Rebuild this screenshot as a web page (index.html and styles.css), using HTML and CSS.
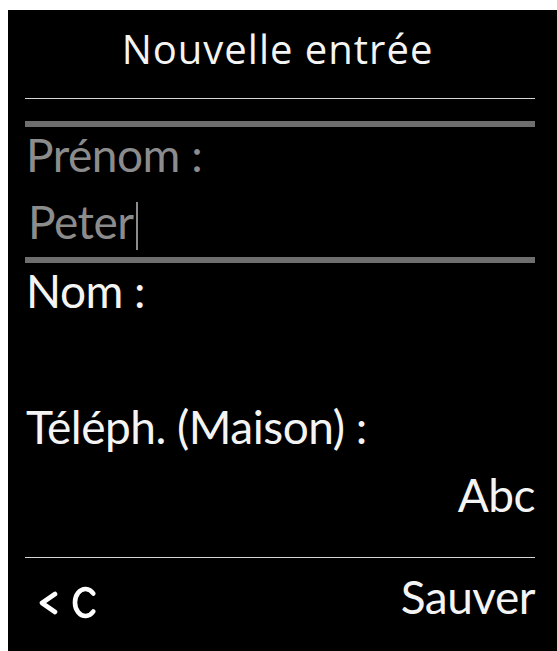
FILE: index.html
```html
<!DOCTYPE html>
<html lang="fr">
<head>
<meta charset="utf-8">
<title>Nouvelle entrée</title>
<link rel="stylesheet" href="styles.css">
</head>
<body>
<div class="screen">
  <div class="title">Nouvelle entrée</div>
  <div class="rule"></div>
  <div class="field-active">
    <div class="row label-dim">Prénom :</div>
    <div class="row value-dim">Peter<span class="cursor"></span></div>
  </div>
  <div class="row label">Nom :</div>
  <div class="row empty"></div>
  <div class="row label">Téléph. (Maison) :</div>
  <div class="row mode">Abc</div>
  <div class="rule rule-bottom"></div>
  <div class="footer">
    <svg class="back-icon" width="64" height="38" viewBox="0 0 64 38" aria-label="Effacer">
      <polyline points="19,10 6,19 19,28" fill="none" stroke="#ffffff" stroke-width="4.6" stroke-linecap="round" stroke-linejoin="round"/>
      <path d="M57.3,9.5 A10.5,13.5 0 1 0 57.3,27.5" fill="none" stroke="#ffffff" stroke-width="4.6" stroke-linecap="round"/>
    </svg>
    <div class="row softkey">Sauver</div>
  </div>
</div>
</body>
</html>
```

FILE: styles.css
```css
html, body {
  margin: 0;
  padding: 0;
  background: #ffffff;
}

body {
  font-family: Lato, "Open Sans", "DejaVu Sans", sans-serif;
}

.screen {
  margin: 10px 0 0 8px;
  height: 641px;
  background: #000000;
  padding: 15px 22px 0 17px;
  box-sizing: border-box;
  overflow: hidden;
  color: #f4f4f4;
}

.title {
  font-family: "Open Sans", "Noto Sans", sans-serif;
  font-size: 40px;
  letter-spacing: 1px;
  line-height: 48px;
  height: 48px;
  text-align: center;
  padding-right: 5px;
}

.rule {
  height: 1px;
  background: #d6d6d6;
  margin-top: 25px;
}

.field-active {
  margin-top: 22px;
  border-top: 6px solid #6e6e6e;
  border-bottom: 6px solid #6e6e6e;
  padding-bottom: 7px;
}

.row {
  font-size: 46px;
  letter-spacing: -0.5px;
  line-height: 56px;
  height: 56px;
  white-space: nowrap;
  padding-left: 1px;
}

.label-dim,
.value-dim {
  color: #8c8c8c;
}

.value-dim {
  margin-top: 11px;
  padding-left: 3px;
}

.cursor {
  display: inline-block;
  width: 2px;
  height: 48px;
  background: #8c8c8c;
  vertical-align: -11px;
  margin-left: 3px;
}

.empty {
  height: 80px;
}

.mode {
  margin-top: 12px;
  text-align: right;
}

.rule-bottom {
  margin-top: 34px;
}

.footer {
  margin-top: 11px;
  display: flex;
  justify-content: space-between;
  align-items: flex-start;
}

.back-icon {
  display: block;
  margin: 15px 0 0 11px;
  filter: blur(0.5px);
}

.softkey {
  text-align: right;
}
```
